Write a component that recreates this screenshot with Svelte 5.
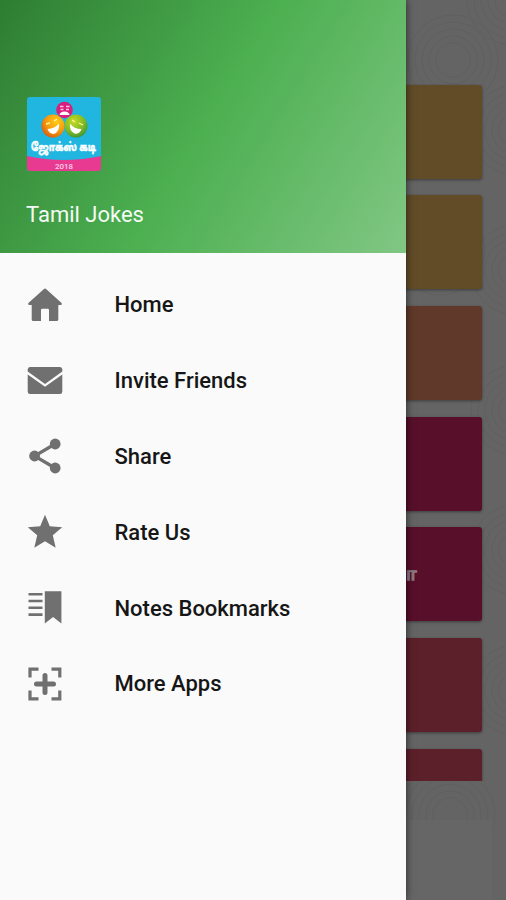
<script>
  const items = [
    { icon: "home", label: "Home" },
    { icon: "mail", label: "Invite Friends" },
    { icon: "share", label: "Share" },
    { icon: "star", label: "Rate Us" },
    { icon: "notes", label: "Notes Bookmarks" },
    { icon: "apps", label: "More Apps" },
  ];

  const cards = [
    { tone: "gold", text: "" },
    { tone: "gold", text: "" },
    { tone: "brown", text: "" },
    { tone: "wine", text: "" },
    { tone: "wine", text: "ா" },
    { tone: "red", text: "" },
    { tone: "red", text: "" },
  ];

  const centers = [[453, 60], [512, 0], [516, 130], [440, 250], [516, 270], [516, 410], [516, 550], [516, 690], [450, 815]];
  const rings = [17, 24, 31, 38, 45];
</script>

<div class="screen">
  <main>
    <svg class="pattern" viewBox="0 0 506 900">
      {#each centers as [x, y]}
        {#each rings as r}
          <circle cx={x} cy={y} {r} />
        {/each}
      {/each}
    </svg>
    <div class="list">
      {#each cards as card}
        <div class="card {card.tone}">{card.text}</div>
      {/each}
    </div>
    <div class="banner"></div>
  </main>

  <nav class="drawer">
    <header>
      <svg class="logo" viewBox="0 0 74 74">
        <defs>
          <radialGradient id="orange" cx=".65" cy=".3" r=".75">
            <stop offset="0" stop-color="#ffcb14" />
            <stop offset=".6" stop-color="#f6990f" />
            <stop offset="1" stop-color="#d85f12" />
          </radialGradient>
          <radialGradient id="green" cx=".4" cy=".3" r=".75">
            <stop offset="0" stop-color="#c6db22" />
            <stop offset=".6" stop-color="#7fba28" />
            <stop offset="1" stop-color="#3f9038" />
          </radialGradient>
        </defs>
        <rect width="74" height="74" rx="3" fill="#20b6df" />
        <path d="M0 59Q37 67 74 59V71Q74 74 71 74H3Q0 74 0 71Z" fill="#e93a91" />
        <circle cx="37.500" cy="13" r="8.300" fill="#d91e7e" />
        <circle cx="26" cy="29" r="11.500" fill="url(#orange)" />
        <circle cx="49" cy="29" r="11.500" fill="url(#green)" />
        <g fill="none" stroke="#f9c3de" stroke-width="1.3">
          <path d="M33 9.500h3.500M39 9.500h3.500M33.500 12.500h3M39 12.500h3" />
          <path d="M19 27l4-1M27 24l3-2M45 23l3 2M52 26l4 2" stroke="#fff3a0" />
        </g>
        <path d="M32.500 18Q33 14.500 37.500 14.500Q42 14.500 42.500 18Z" fill="#fff" />
        <path d="M20.500 32Q28 31.500 32 26.500Q33 35 26.500 37Q22 36.500 20.500 32Z" fill="#fff" />
        <path d="M43 26.500Q47 32 54.500 32Q53 37 48 36.800Q42 34 43 26.500Z" fill="#fff" />
        <text x="4" y="53.500" textLength="65" lengthAdjust="spacingAndGlyphs" class="title">ஜோக்ஸ் கடி</text>
        <text x="28" y="71.500" textLength="18" lengthAdjust="spacingAndGlyphs" class="year">2018</text>
      </svg>
      <div class="name">Tamil Jokes</div>
    </header>

    <ul>
      {#each items as item}
        <li>
          <svg class="icon" viewBox="0 0 38 38">
            {#if item.icon === "home"}
              <path d="M19 2.500Q19.600 2.500 20.300 3.200L35.600 17Q36.500 19 34 19H32.300V33.500Q32.300 35 30.800 35H23V24Q23 22.800 21.800 22.800H16.200Q15 22.800 15 24V35H7.200Q5.700 35 5.700 33.500V19H4Q1.500 19 2.400 17L17.700 3.200Q18.400 2.500 19 2.500Z" />
            {:else if item.icon === "mail"}
              <path d="M4 5H34Q36.300 5 36.300 7.500V9.500L19 22L1.700 9.500V7.500Q1.700 5 4 5Z" />
              <path d="M1.700 12.500L19 24.800L36.300 12.500V29.500Q36.300 32 34 32H4Q1.700 32 1.700 29.500Z" />
            {:else if item.icon === "share"}
              <path d="M29 7L8.500 19L29 31" class="line" />
              <circle cx="29.200" cy="7" r="5.400" />
              <circle cx="8.600" cy="19" r="5.400" />
              <circle cx="29.200" cy="31" r="5.400" />
            {:else if item.icon === "star"}
              <path d="M19 1.800L23.800 13.200L36.200 14.200L26.800 22.300L29.700 34.700L19 28.200L8.300 34.700L11.200 22.300L1.800 14.200L14.200 13.200Z" />
            {:else if item.icon === "notes"}
              <path d="M2.500 3.900H16.500V6.500H2.500ZM2.500 10.700H16.500V13.300H2.500ZM2.500 17.500H16.500V20.100H2.500ZM2.500 24.300H16.500V26.900H2.500Z" />
              <path d="M18.800 2.200H35.400V34.500L27.100 28L18.800 34.500Z" />
            {:else}
              <path d="M4 12.500V4.200H12.500M25.500 4.200H33.800V12.500M33.800 25.500V33.800H25.500M12.500 33.800H4V25.500" class="line" />
              <path d="M19 10.500V27.500M10.500 19H27.500" class="plus" />
            {/if}
          </svg>
          <span>{item.label}</span>
        </li>
      {/each}
    </ul>
  </nav>
</div>

<style>
  :global(body) {
    margin: 0;
    font-family: Roboto, sans-serif;
  }
  .screen {
    position: relative;
    width: 506px;
    height: 900px;
    overflow: hidden;
    background: #646464;
  }
  main {
    position: relative;
    display: flex;
    flex-direction: column;
    height: 900px;
  }
  .pattern {
    position: absolute;
    inset: 0;
    fill: none;
    stroke: #606060;
    stroke-width: 1;
  }
  .list {
    position: relative;
    display: flex;
    flex-direction: column;
    gap: 16.700px;
    box-sizing: border-box;
    height: 781px;
    padding: 84.500px 24px 0;
    overflow: hidden;
  }
  .card {
    flex: none;
    display: flex;
    align-items: center;
    justify-content: flex-end;
    box-sizing: border-box;
    height: 94px;
    padding-right: 66px;
    border-radius: 3px;
    box-shadow: 0 1px 3px rgba(0, 0, 0, 0.4);
    color: #8b7880;
    font-size: 20px;
    font-weight: 700;
    -webkit-text-stroke: 0.8px #8b7880;
  }
  .gold {
    background: #624c27;
  }
  .brown {
    background: #60392a;
  }
  .wine {
    background: #580f2a;
  }
  .red {
    background: #5c202b;
  }
  .banner {
    position: relative;
    height: 80px;
    margin-top: 39px;
    margin-right: 14px;
    background: #666;
  }
  .drawer {
    position: absolute;
    top: 0;
    left: 0;
    width: 406px;
    height: 900px;
    background: #fafafa;
    box-shadow: 0 0 8px rgba(0, 0, 0, 0.6);
  }
  header {
    display: flex;
    flex-direction: column;
    box-sizing: border-box;
    height: 253px;
    padding: 97px 26px 0;
    background: linear-gradient(121.9deg, #2e7d32, #4caf50 50%, #81c784);
  }
  .logo {
    width: 74px;
    height: 74px;
    margin-left: 1px;
    overflow: visible;
  }
  .title {
    fill: #fff;
    stroke: #fff;
    stroke-width: 0.5;
    font: 700 11.500px "Noto Sans Tamil", "Noto Sans", sans-serif;
  }
  .year {
    fill: #fbd3e6;
    font: 500 8px Roboto, sans-serif;
  }
  .name {
    margin-top: 30px;
    color: #f4fbf4;
    font-size: 22px;
    line-height: 27px;
  }
  ul {
    margin: 0;
    padding: 14px 0 0;
    list-style: none;
  }
  li {
    display: flex;
    align-items: center;
    height: 75.800px;
    padding-left: 26px;
    color: #161616;
    font-size: 22px;
    font-weight: 500;
  }
  .icon {
    width: 38px;
    height: 38px;
    margin-right: 50.500px;
    fill: #707070;
  }
  .line {
    fill: none;
    stroke: #707070;
    stroke-width: 3.2;
  }
  .plus {
    fill: none;
    stroke: #707070;
    stroke-width: 5;
    stroke-linecap: round;
  }
</style>
